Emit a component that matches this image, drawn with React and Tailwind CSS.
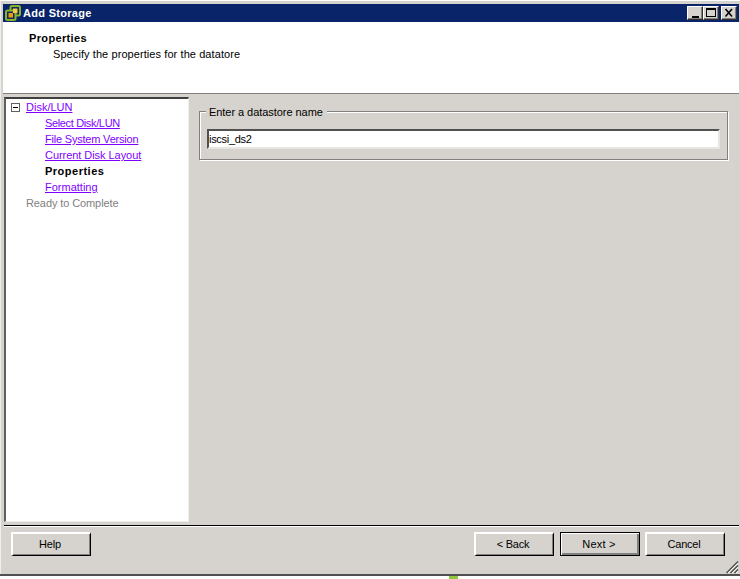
import React from 'react';

const FONT = { fontFamily: '"Liberation Sans", Arial, sans-serif' };

const WizardLink = ({ children }) => (
  <div className="h-4 leading-4 pl-[37px]">
    <span className="text-[#8000ff] underline">{children}</span>
  </div>
);

const CaptionButton = ({ children }) => (
  <div className="relative w-4 h-[14px] bg-[#d6d3ce] border-t border-l border-t-white border-l-white border-r border-b border-r-[#303030] border-b-[#303030] shadow-[inset_-1px_-1px_0_#808080]">
    {children}
  </div>
);

const Button = ({ children, primary, className = '' }) => (
  <button
    className={`w-20 h-6 pr-[3px] text-[11px] text-black bg-[#d6d3ce] border-t-2 border-l-2 border-t-white border-l-white border-r border-b border-r-black border-b-black ${
      primary
        ? 'tracking-[0.2px] outline outline-1 outline-black -outline-offset-1 shadow-[inset_-2px_-2px_0_#808080]'
        : 'tracking-[-0.2px] shadow-[inset_-1px_-1px_0_#808080]'
    } ${className}`}
  >
    {children}
  </button>
);

const VmIcon = () => (
  <svg width="16" height="16" viewBox="0 0 16 16" className="shrink-0">
    <rect x="5.5" y="1" width="9.5" height="9.5" rx="1.5" fill="#16285c" stroke="#86b52c" strokeWidth="2" />
    <rect x="1" y="5.5" width="9.5" height="9.5" rx="1.5" fill="#16285c" stroke="#86b52c" strokeWidth="2" />
    <rect x="3.5" y="8" width="4.5" height="4.5" fill="#e89a18" />
    <rect x="8" y="3.5" width="4.5" height="4.5" fill="#f8c848" />
  </svg>
);

const App = () => {
  return (
    <div style={FONT} className="w-[740px] h-[579px] flex flex-col bg-[#d6d3ce] text-[11px] text-black overflow-hidden">
      <div className="h-[574px] flex flex-col pt-[3px] pl-[2px] pr-[1px] border-t border-l border-t-white border-l-[#f0eeea]">
        {/* title bar */}
        <div className="h-[18px] bg-[#0a246a] flex items-center justify-between pl-[2px] pr-[2px] shrink-0">
          <div className="flex items-center gap-[2px]">
            <VmIcon />
            <span className="text-white font-bold text-[11px] tracking-[0.3px]">Add Storage</span>
          </div>
          <div className="flex items-center">
            <CaptionButton>
              <div className="absolute left-[4px] bottom-[1px] w-[7px] h-[2px] bg-black" />
            </CaptionButton>
            <CaptionButton>
              <div className="absolute left-[2px] top-[1px] w-[10px] h-[9px] border border-black border-t-2" />
            </CaptionButton>
            <div className="ml-[2px]">
              <CaptionButton>
                <svg width="14" height="12" viewBox="0 0 14 12" className="absolute left-0 top-0">
                  <path d="M3.5 2l6.5 7.5M10 2l-6.5 7.5" stroke="#000" strokeWidth="1.6" fill="none" />
                </svg>
              </CaptionButton>
            </div>
          </div>
        </div>

        {/* header */}
        <div className="h-[71px] bg-white pl-[26px] pt-[9px] shrink-0">
          <div className="font-bold leading-[14px] tracking-[0.35px]">Properties</div>
          <div className="pl-6 leading-[18px] tracking-[0.08px]">Specify the properties for the datatore</div>
        </div>
        <div className="h-px bg-[#808080] shrink-0" />

        {/* body */}
        <div className="flex flex-1 min-h-0 pt-[3px] pl-[1px]">
          <div className="w-[185px] h-[425px] bg-white border-t-2 border-l-2 border-t-[#404040] border-l-[#606060] border-r border-b border-r-[#f0eeea] border-b-[#f0eeea] pl-[4px]">
            <div className="h-4 leading-4 flex items-center">
              <span className="relative w-[9px] h-[9px] border border-[#606060] ml-[1px] mr-[6px]">
                <span className="absolute left-[1px] top-[3px] w-[5px] h-px bg-black" />
              </span>
              <span className="text-[#8000ff] underline">Disk/LUN</span>
            </div>
            <div className="-ml-[2px]">
              <div className="tracking-[-0.35px]">
                <WizardLink>Select Disk/LUN</WizardLink>
              </div>
              <div className="tracking-[-0.2px]">
                <WizardLink>File System Version</WizardLink>
              </div>
              <div className="tracking-[-0.05px]">
                <WizardLink>Current Disk Layout</WizardLink>
              </div>
              <div className="h-4 leading-4 pl-[37px] font-bold tracking-[0.5px]">Properties</div>
              <WizardLink>Formatting</WizardLink>
              <div className="h-4 leading-4 pl-[18px] text-[#808080] tracking-[-0.1px]">Ready to Complete</div>
            </div>
          </div>

          <div className="flex-1 pl-[10px] pr-[11px] pt-[14px]">
            <fieldset className="relative h-[49px] border border-[#808080] shadow-[1px_1px_0_#ffffff,inset_1px_1px_0_#ffffff] px-[7px] pt-[17px]">
              <span className="absolute -top-[7px] left-[6px] bg-[#d6d3ce] pl-[3px] pr-[4px] leading-[14px] tracking-[-0.05px]">Enter a datastore name</span>
              <div className="h-5 bg-white border-t-2 border-l-2 border-t-[#505050] border-l-[#505050] border-r-2 border-b-2 border-r-[#e8e6e0] border-b-[#e8e6e0] leading-[16px] tracking-[-0.3px]">
                iscsi_ds2
              </div>
            </fieldset>
          </div>
        </div>

        {/* footer */}
        <div className="relative h-[49px] shrink-0 ml-[1px] border-t border-t-black">
          <div className="h-px bg-white" />
          <div className="flex justify-between pt-[5px] pl-[7px] pr-[14px]">
            <Button>Help</Button>
            <div className="flex">
              <Button>&lt; Back</Button>
              <Button primary className="ml-[6px]">Next &gt;</Button>
              <Button className="ml-[5px]">Cancel</Button>
            </div>
          </div>
          <svg width="14" height="14" viewBox="0 0 14 14" className="absolute right-0 bottom-0">
            <path d="M1.5 13L13 1.5M5.5 13L13 5.5M9.5 13L13 9.5" stroke="#505050" strokeWidth="1.5" fill="none" />
            <path d="M3 13L13 3M7 13l6-6M11 13l2-2" stroke="#ffffff" strokeWidth="0.8" fill="none" />
          </svg>
        </div>
      </div>

      <div className="h-[2px] bg-[#505050] shrink-0" />
      <div className="flex-1 bg-white">
        <div className="ml-[449px] w-[9px] h-[3px] bg-[#8dc83c]" />
      </div>
    </div>
  );
};

export default App;
